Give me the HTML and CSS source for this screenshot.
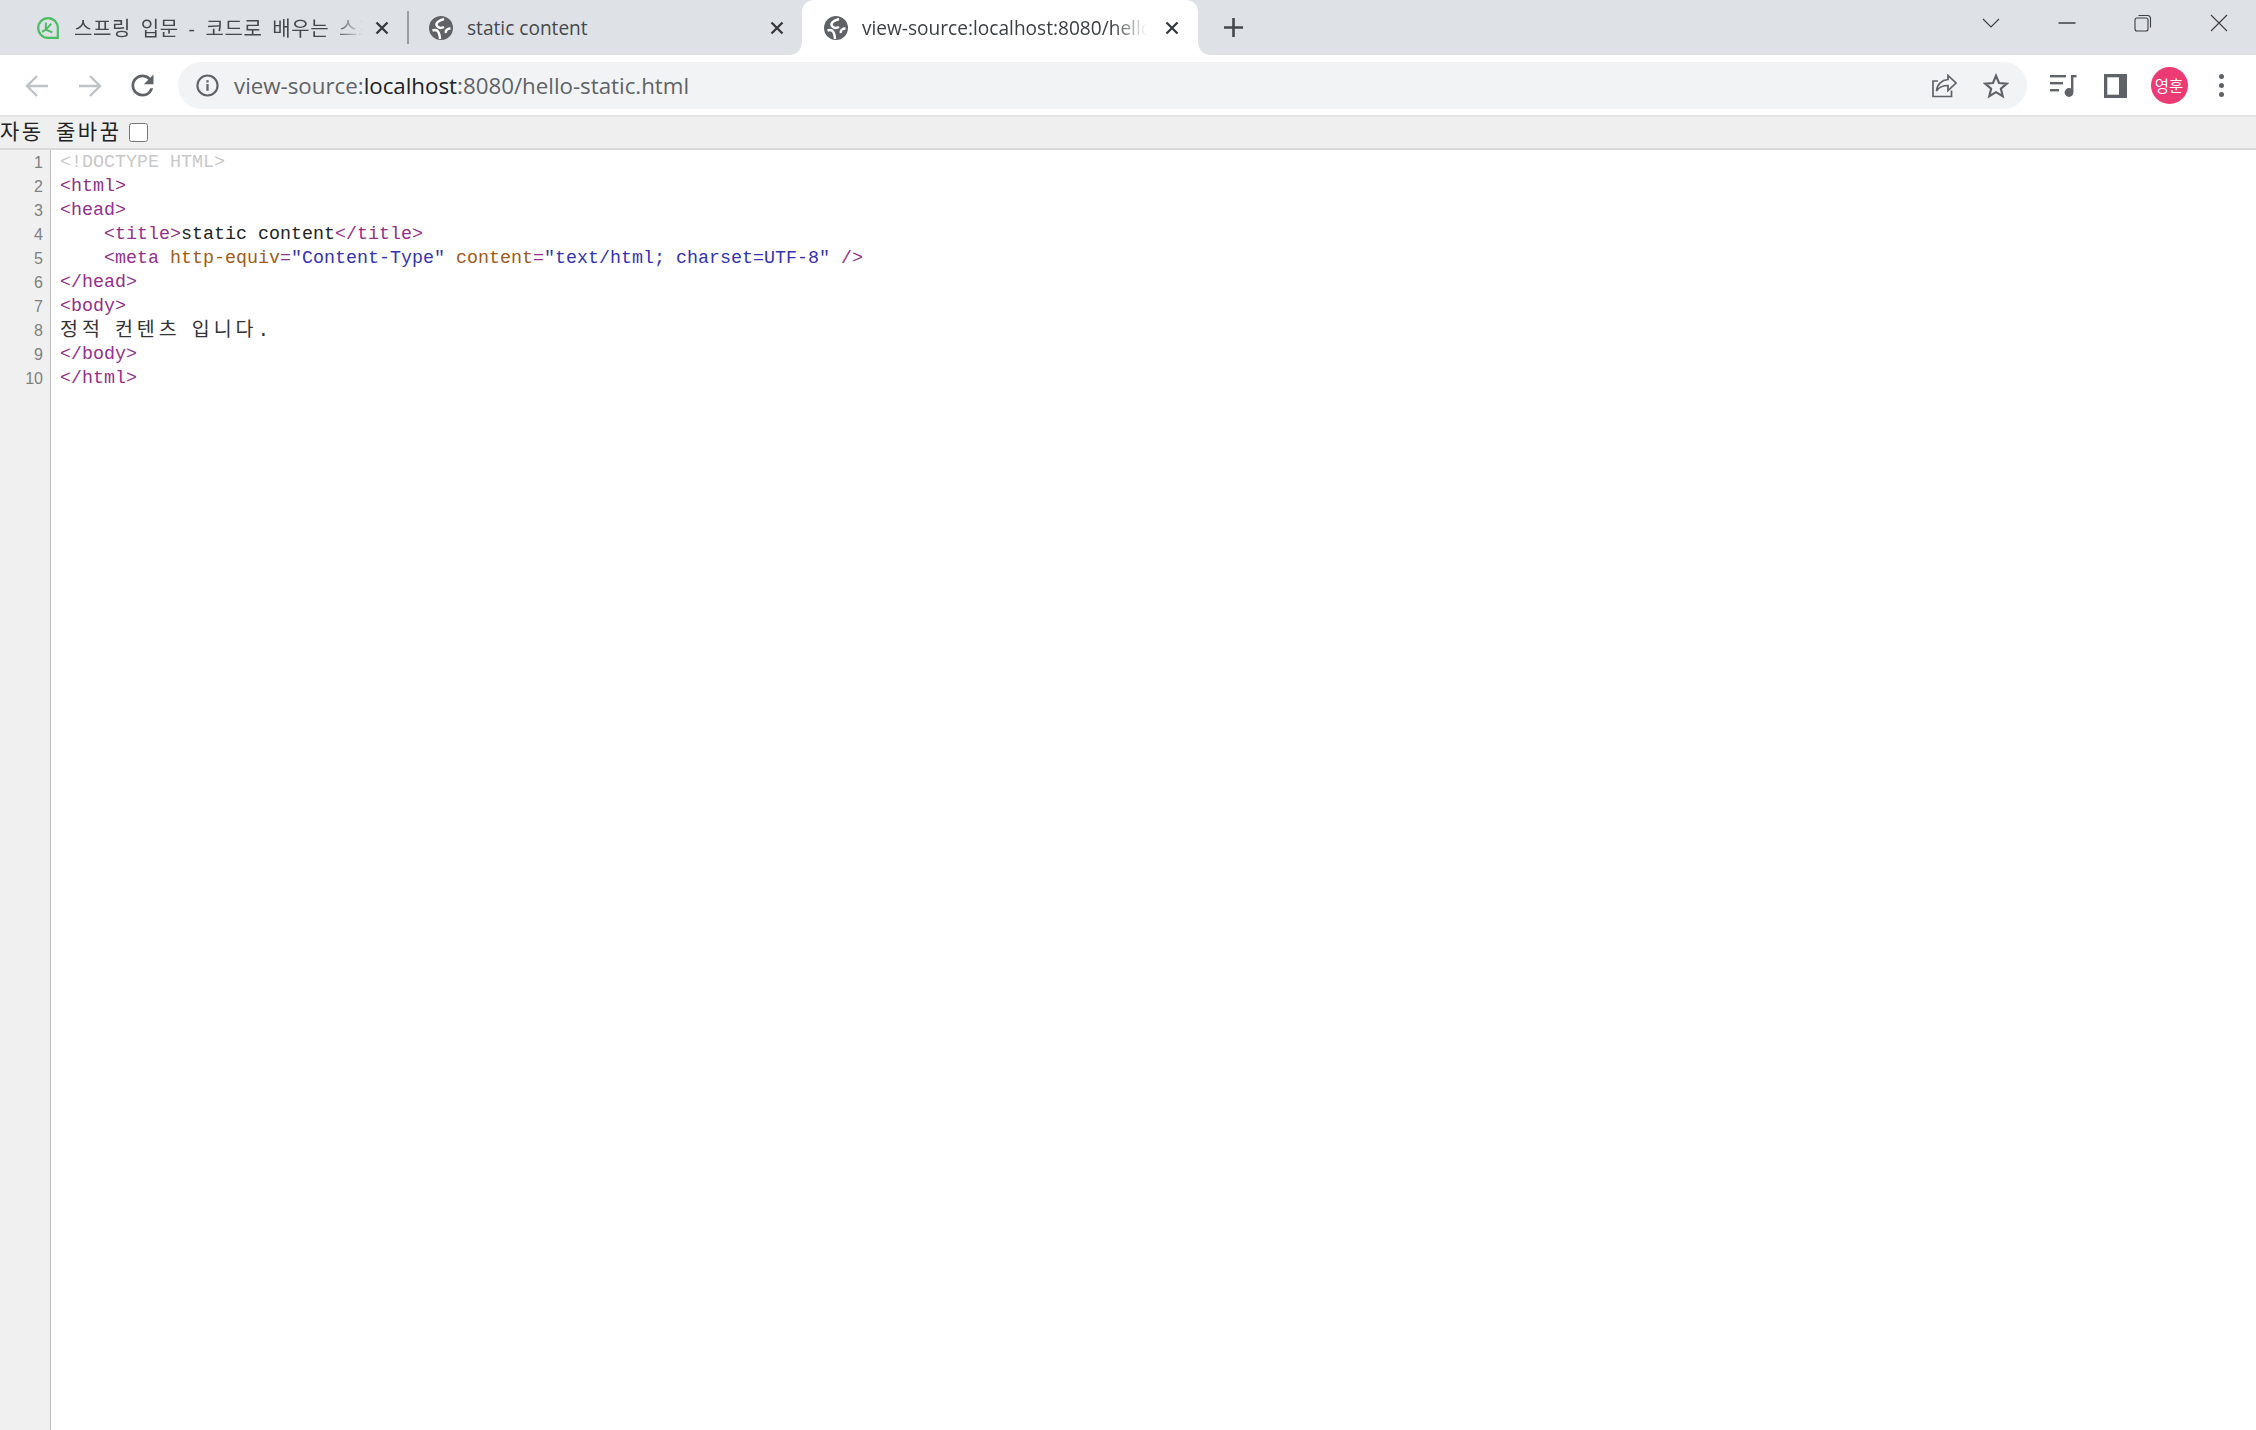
FILE: index.html
```html
<!DOCTYPE html>
<html lang="ko">
<head>
<meta charset="utf-8">
<title>view-source:localhost:8080/hello-static.html</title>
<link rel="stylesheet" href="styles.css">
</head>
<body>
<div class="strip">
  <div class="tab tab-first">
    <svg class="favicon" viewBox="0 0 22 22"><path class="leaf" d="M11 2a9 9 0 0 0 0 18h9v-9a9 9 0 0 0-9-9z"/><path class="leaf-in" d="M5.5 14.5 9 12.5l6 2.5M9 12.5V6M9 12.5 14 7"/></svg>
    <span class="title title-ko">스프링 입문 - 코드로 배우는 스프링 부트</span>
    <svg class="close" viewBox="0 0 14 14"><path d="M1.5 1.5l11 11M12.5 1.5l-11 11"/></svg>
  </div>
  <div class="sep"></div>
  <div class="tab tab-second">
    <svg class="favicon" viewBox="0 0 24 24"><circle class="globe" cx="12" cy="12" r="12"/><path class="globe-in" d="M15 3C10 4.500 6 7 8 10c1.500 2 4 2.500 7 1M3.500 14.500c3-1 5.500 0 6.500 3s1 4 1 5.500M21.500 12.500c-2.500 0-5.500 1.500-4.500 4.500"/></svg>
    <span class="title">static content</span>
    <svg class="close" viewBox="0 0 14 14"><path d="M1.500 1.500l11 11M12.500 1.500l-11 11"/></svg>
  </div>
  <div class="tab tab-active">
    <svg class="favicon" viewBox="0 0 24 24"><circle class="globe" cx="12" cy="12" r="12"/><path class="globe-in" d="M15 3C10 4.500 6 7 8 10c1.500 2 4 2.500 7 1M3.500 14.500c3-1 5.500 0 6.500 3s1 4 1 5.500M21.500 12.500c-2.500 0-5.500 1.500-4.500 4.500"/></svg>
    <span class="title">view-source:localhost:8080/hello-static.html</span>
    <svg class="close" viewBox="0 0 14 14"><path d="M1.500 1.500l11 11M12.500 1.500l-11 11"/></svg>
  </div>
  <svg class="plus" viewBox="0 0 19 19"><path d="M9.500 0v19M0 9.500h19"/></svg>
  <div class="win">
    <div class="win-btn"><svg class="win-ico" viewBox="0 0 18 18"><path d="M1 5l8 8 8-8"/></svg></div>
    <div class="win-btn"><svg class="win-ico" viewBox="0 0 18 18"><path class="thick" d="M0.500 9h17"/></svg></div>
    <div class="win-btn"><svg class="win-ico" viewBox="0 0 18 18"><rect x="1" y="4" width="13" height="13" rx="2"/><path d="M4.500 1.500h9a3 3 0 0 1 3 3v9"/></svg></div>
    <div class="win-btn"><svg class="win-ico" viewBox="0 0 18 18"><path d="M1 1l16 16M17 1L1 17"/></svg></div>
  </div>
</div>

<div class="toolbar">
  <div class="nav-btn"><svg class="ico-24 faded" viewBox="0 0 24 24"><path d="M23 12H2M12 2 2 12l10 10"/></svg></div>
  <div class="nav-btn"><svg class="ico-24 faded" viewBox="0 0 24 24"><path d="M1 12h21M12 2l10 10-10 10"/></svg></div>
  <div class="nav-btn"><svg class="reload" viewBox="0 0 24 24"><path d="M17.650 6.350A7.958 7.958 0 0 0 12 4c-4.420 0-7.990 3.580-7.990 8s3.570 8 7.990 8c3.730 0 6.840-2.550 7.730-6h-2.080A5.990 5.990 0 0 1 12 18c-3.310 0-6-2.690-6-6s2.690-6 6-6c1.660 0 3.140.690 4.220 1.780L13 11h7V4l-2.350 2.350z"/></svg></div>
  <div class="omnibox">
    <svg class="info" viewBox="0 0 24 24"><circle class="info-ring" cx="12" cy="12" r="10.500"/><rect class="info-dot" x="10.800" y="10.500" width="2.400" height="7"/><rect class="info-dot" x="10.800" y="6.500" width="2.400" height="2.400"/></svg>
    <span class="url">view-source:<span class="host">localhost</span>:8080/hello-static.html</span>
    <svg class="share" viewBox="0 0 25 24"><path d="M6 7H1v15.500h18.500V16.500"/><path d="M4.500 17C5 10 10 6 16 5.500V1.500l8 7.500-8 7.500v-5C10.500 11.500 7 13 4.500 17z"/></svg>
    <svg class="star" viewBox="0 0 24 24"><path d="M12 2.500l2.800 6.700 7.200.6-5.500 4.700 1.700 7L12 17.700l-6.200 3.800 1.700-7L2 9.800l7.200-.6z"/></svg>
  </div>
  <div class="actions">
    <div class="act"><svg class="media" viewBox="0 0 27 24"><rect x="0" y="1" width="16" height="2.400"/><rect x="0" y="8" width="13" height="2.400"/><rect x="0" y="15" width="9" height="2.400"/><rect x="21" y="1" width="2.400" height="17"/><rect x="21" y="1" width="5.500" height="2.400"/><circle cx="19" cy="18.500" r="4.400"/></svg></div>
    <div class="act"><svg class="panel" viewBox="0 0 23 24"><rect class="panel-bg" width="23" height="24"/><rect class="panel-in" x="3.300" y="3.300" width="11.700" height="17.400"/></svg></div>
    <div class="act act-avatar"><span class="avatar">영훈</span></div>
    <div class="act act-menu"><span class="dots"><i></i><i></i><i></i></span></div>
  </div>
</div>

<div class="infobar">
  <label class="wrap-label">자동 줄바꿈</label>
  <input class="wrap-check" type="checkbox">
</div>

<div class="source">
  <div class="gutter">
    <div>1</div><div>2</div><div>3</div><div>4</div><div>5</div><div>6</div><div>7</div><div>8</div><div>9</div><div>10</div>
  </div>
  <div class="code">
    <div class="doctype">&lt;!DOCTYPE HTML&gt;</div>
    <div class="tag">&lt;html&gt;</div>
    <div class="tag">&lt;head&gt;</div>
    <div>    <span class="tag">&lt;title&gt;</span>static content<span class="tag">&lt;/title&gt;</span></div>
    <div>    <span class="tag">&lt;meta </span><span class="attr">http-equiv</span><span class="tag">=</span><span class="val">"Content-Type"</span> <span class="attr">content</span><span class="tag">=</span><span class="val">"text/html; charset=UTF-8"</span><span class="tag"> /&gt;</span></div>
    <div class="tag">&lt;/head&gt;</div>
    <div class="tag">&lt;body&gt;</div>
    <div class="hangul">정적 컨텐츠 입니다.</div>
    <div class="tag">&lt;/body&gt;</div>
    <div class="tag">&lt;/html&gt;</div>
  </div>
</div>
</body>
</html>
```

FILE: styles.css
```css
html, body {
  margin: 0;
  height: 100%;
  overflow: hidden;
  background: #fff;
}
body {
  display: flex;
  flex-direction: column;
  font-family: "Open Sans", "Noto Sans CJK KR", sans-serif;
}

/* tab strip */
.strip {
  flex: none;
  height: 55px;
  background: #dee1e6;
  display: flex;
  align-items: center;
  padding-left: 12px;
}
.tab {
  position: relative;
  height: 55px;
  box-sizing: border-box;
  display: flex;
  align-items: center;
  gap: 14px;
  font-size: 19.100px;
  color: #45484c;
}
.tab-first { width: 396px; padding: 0 15px 0 24px; }
.sep { flex: none; width: 2px; height: 33px; background: #9a9da1; margin-left: -1px; margin-right: -1px; }
.tab-second { width: 394px; padding: 0 14px 0 21px; }
.tab-active {
  width: 396px;
  padding: 0 15px 0 22px;
  background: #fff;
  border-radius: 12px 12px 0 0;
  color: #3c4043;
}
.tab-active::before,
.tab-active::after {
  content: "";
  position: absolute;
  bottom: 0;
  width: 12px;
  height: 12px;
}
.tab-active::before {
  left: -12px;
  background: radial-gradient(circle at 0 0, transparent 11.500px, #fff 12px);
}
.tab-active::after {
  right: -12px;
  background: radial-gradient(circle at 100% 0, transparent 11.500px, #fff 12px);
}
.favicon { flex: none; width: 24px; height: 24px; }
.leaf { fill: none; stroke: #49bd62; stroke-width: 2; }
.leaf-in { fill: none; stroke: #49bd62; stroke-width: 1.800; }
.globe { fill: #5f6368; }
.globe-in { fill: none; stroke: #fff; stroke-width: 2.400; }
.title {
  flex: 1;
  min-width: 0;
  overflow: hidden;
  white-space: nowrap;
  -webkit-mask-image: linear-gradient(to left, transparent 0, #000 34px);
  mask-image: linear-gradient(to left, transparent 0, #000 34px);
}
.tab-second .title { -webkit-mask-image: none; mask-image: none; }
.title-ko {
  margin-right: -6px;
  font-size: 20px;
  letter-spacing: .6px;
  word-spacing: 4px;
  -webkit-mask-image: linear-gradient(to left, transparent 0, #000 30px);
  mask-image: linear-gradient(to left, transparent 0, #000 30px);
}
.close { flex: none; width: 14px; height: 14px; margin: 0 4px; fill: none; stroke: #35383c; stroke-width: 2.300; }
.plus { flex: none; width: 19px; height: 19px; margin-left: 26px; fill: none; stroke: #44474b; stroke-width: 2.600; }

.win {
  margin-left: auto;
  margin-right: -1px;
  align-self: flex-start;
  display: flex;
}
.win-btn { width: 76px; height: 46px; display: flex; align-items: center; justify-content: center; }
.win-ico { width: 18px; height: 18px; fill: none; stroke: #3c3f43; stroke-width: 1.100; }
.win-ico .thick { stroke-width: 1.500; }

/* toolbar */
.toolbar {
  flex: none;
  box-sizing: border-box;
  height: 62px;
  background: #fff;
  border-bottom: 2px solid #e3e3e3;
  display: flex;
  align-items: flex-start;
  padding: 7px 11px 0 10px;
}
.nav-btn {
  flex: none;
  width: 53px;
  height: 47px;
  display: flex;
  align-items: center;
  justify-content: center;
}
.ico-24 { width: 24px; height: 24px; fill: none; stroke-width: 2.400; }
.faded { stroke: #bfc2c6; }
.reload { width: 33px; height: 33px; fill: #5f6368; }
.omnibox {
  flex: 1;
  min-width: 0;
  height: 47px;
  margin-left: 9px;
  border-radius: 24px;
  background: #f1f3f4;
  display: flex;
  align-items: center;
  padding: 0 18px 0 18px;
}
.info { flex: none; width: 23px; height: 23px; }
.info-ring { fill: none; stroke: #5f6368; stroke-width: 2.200; }
.info-dot { fill: #5f6368; }
.url { flex: 1; margin-left: 15px; font-size: 22.300px; color: #5f6368; white-space: nowrap; }
.host { color: #202124; }
.share { flex: none; width: 25px; height: 24px; margin-right: 26px; fill: none; stroke: #5f6368; stroke-width: 1.700; }
.star { flex: none; width: 26px; height: 26px; fill: none; stroke: #5f6368; stroke-width: 2; }
.actions { flex: none; margin-left: 10px; display: flex; }
.act { width: 52px; height: 47px; display: flex; align-items: center; justify-content: center; }
.media { width: 27px; height: 24px; fill: #5f6368; }
.panel { width: 23px; height: 24px; }
.panel-bg { fill: #5f6368; }
.panel-in { fill: #fff; }
.act-avatar { margin: 0 2px; }
.avatar {
  width: 37px;
  height: 37px;
  border-radius: 50%;
  background: #ec3a74;
  color: #fff;
  font-family: "Noto Sans CJK KR", sans-serif;
  font-size: 15.500px;
  line-height: 37px;
  text-align: center;
}
.act-menu { width: 48px; }
.dots { display: flex; flex-direction: column; gap: 4px; }
.dots i { display: block; width: 5px; height: 5px; border-radius: 50%; background: #5f6368; }

/* info bar */
.infobar {
  flex: none;
  box-sizing: border-box;
  height: 33px;
  background: #efefef;
  border-bottom: 2px solid #d9d9d9;
  display: flex;
  align-items: center;
  color: #222;
  font-family: "Noto Sans CJK KR", sans-serif;
  font-size: 21px;
}
.wrap-label { margin-bottom: 5px; letter-spacing: 2.500px; white-space: nowrap; word-spacing: 4px; }
.wrap-check { width: 19px; height: 19px; margin: 0 0 1px 8px; }

/* source */
.source {
  flex: 1;
  min-height: 0;
  display: flex;
  font-family: "Liberation Mono", monospace;
  font-size: 18.330px;
  line-height: 24px;
  background: #fff;
}
.gutter {
  flex: none;
  width: 50px;
  padding-top: 1px;
  background: #f0f0f0;
  border-right: 1px solid #bbb;
  text-align: right;
  font-family: "Liberation Sans", sans-serif;
  font-size: 16px;
  color: #808080;
}
.gutter > div { padding-right: 7px; }
.code {
  flex: 1;
  padding: 1px 0 0 9px;
  color: #222;
}
.code > div { white-space: pre; }
.doctype { color: #c8c8c8; }
.tag { color: #92308c; }
.attr { color: #a05a1a; }
.val { color: #3434ae; }
.code > .hangul {
  font-family: "Liberation Mono", "Noto Sans CJK KR", monospace;
  font-size: 19.500px;
  letter-spacing: 4px;
  word-spacing: -4.700px;
  color: #333;
}
```
